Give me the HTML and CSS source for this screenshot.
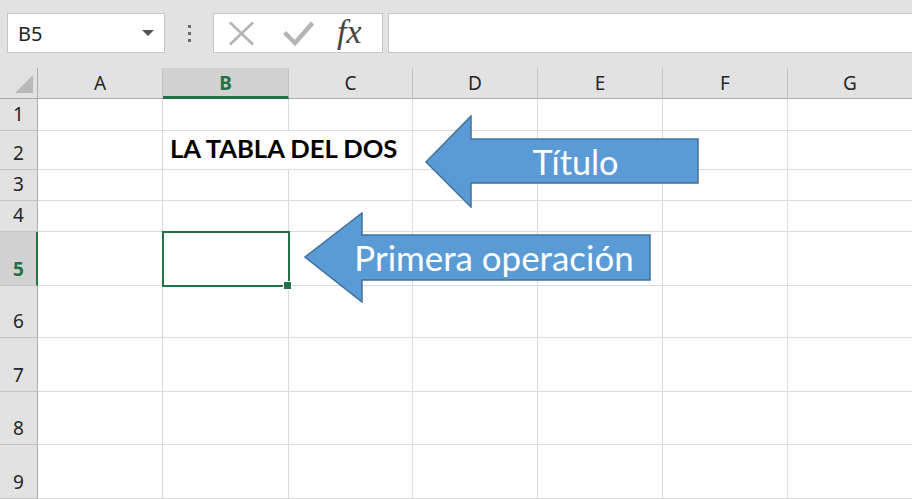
FILE: index.html
```html
<!DOCTYPE html>
<html lang="es">
<head>
    <meta charset="UTF-8">
    <meta name="viewport" content="width=device-width, initial-scale=1.0">
    <title>La tabla del dos</title>
    <link rel="stylesheet" href="styles.css">
</head>
<body>
    <div class="toolbar">
        <div class="namebox">
            <span class="name">B5</span>
            <span class="caret"></span>
        </div>
        <div class="grip"><i></i><i></i><i></i></div>
        <div class="fx-buttons">
            <svg class="btn-cancel" width="27" height="25" viewBox="0 0 27 25">
                <path d="M2 1.5 L25 23.5 M25 1.5 L2 23.5" stroke="#b4b4b4" stroke-width="2.6" fill="none"/>
            </svg>
            <svg class="btn-enter" width="31" height="25" viewBox="0 0 31 25">
                <path d="M1.5 11.5 L12 22 L29.5 2" stroke="#b4b4b4" stroke-width="4.4" fill="none"/>
            </svg>
            <span class="fx">fx</span>
        </div>
        <div class="formula-input"></div>
    </div>

    <div class="sheet">
        <!-- column headers -->
        <div class="corner"><span class="select-all"></span></div>
        <div class="col-head">A</div>
        <div class="col-head active">B</div>
        <div class="col-head">C</div>
        <div class="col-head">D</div>
        <div class="col-head">E</div>
        <div class="col-head">F</div>
        <div class="col-head">G</div>

        <div class="row-head">1</div>
        <div class="cell"></div><div class="cell"></div><div class="cell"></div><div class="cell"></div><div class="cell"></div><div class="cell"></div><div class="cell"></div>

        <div class="row-head">2</div>
        <div class="cell"></div>
        <div class="cell title">LA TABLA DEL DOS</div>
        <div class="cell"></div><div class="cell"></div><div class="cell"></div><div class="cell"></div>

        <div class="row-head">3</div>
        <div class="cell"></div><div class="cell"></div><div class="cell"></div><div class="cell"></div><div class="cell"></div><div class="cell"></div><div class="cell"></div>

        <div class="row-head">4</div>
        <div class="cell"></div><div class="cell"></div><div class="cell"></div><div class="cell"></div><div class="cell"></div><div class="cell"></div><div class="cell"></div>

        <div class="row-head active">5</div>
        <div class="cell"></div>
        <div class="cell selected"><span class="selection"></span><span class="fill-handle"></span></div>
        <div class="cell"></div><div class="cell"></div><div class="cell"></div><div class="cell"></div><div class="cell"></div>

        <div class="row-head">6</div>
        <div class="cell"></div><div class="cell"></div><div class="cell"></div><div class="cell"></div><div class="cell"></div><div class="cell"></div><div class="cell"></div>

        <div class="row-head">7</div>
        <div class="cell"></div><div class="cell"></div><div class="cell"></div><div class="cell"></div><div class="cell"></div><div class="cell"></div><div class="cell"></div>

        <div class="row-head">8</div>
        <div class="cell"></div><div class="cell"></div><div class="cell"></div><div class="cell"></div><div class="cell"></div><div class="cell"></div><div class="cell"></div>

        <div class="row-head">9</div>
        <div class="cell"></div><div class="cell"></div><div class="cell"></div><div class="cell"></div><div class="cell"></div><div class="cell"></div><div class="cell"></div>
    </div>

    <!-- callout arrows drawn over the sheet -->
    <div class="callout callout-title">
        <svg width="275" height="93" viewBox="0 0 275 93">
            <polygon points="1,47 46,1 46,24 273,24 273,68 46,68 46,92" fill="#5b9bd5" stroke="#41719c" stroke-width="1.5"/>
        </svg>
        <span class="callout-label">Título</span>
    </div>
    <div class="callout callout-first">
        <svg width="348" height="91" viewBox="0 0 348 91">
            <polygon points="1,45 58,1 58,23 346,23 346,68 58,68 58,90" fill="#5b9bd5" stroke="#41719c" stroke-width="1.5"/>
        </svg>
        <span class="callout-label">Primera operación</span>
    </div>
</body>
</html>
```

FILE: styles.css
```css
body {
    margin: 0;
    background-color: #fff;
    font-family: "Noto Sans", "Open Sans", sans-serif;
    overflow: hidden;
    width: 912px;
    height: 499px;
    position: relative;
}

/* formula bar */
.toolbar {
    height: 68px;
    box-sizing: border-box;
    padding: 13px 0 0 7px;
    background-color: #e2e2e2;
    display: flex;
    align-items: flex-start;
}
.namebox {
    width: 158px;
    height: 40px;
    box-sizing: border-box;
    border: 1px solid #c6c6c6;
    background-color: #fff;
    display: flex;
    align-items: center;
    justify-content: space-between;
    padding: 0 10px 0 10px;
}
.name {
    font-size: 20px;
    color: #222;
}
.caret {
    width: 0;
    height: 0;
    border-left: 6px solid transparent;
    border-right: 6px solid transparent;
    border-top: 6px solid #555;
}
.grip {
    margin: 12px 22px 0 23px;
    display: flex;
    flex-direction: column;
    gap: 4px;
}
.grip i {
    display: block;
    width: 3px;
    height: 3px;
    background-color: #6b6b6b;
}
.fx-buttons {
    width: 170px;
    height: 40px;
    box-sizing: border-box;
    border: 1px solid #c6c6c6;
    background-color: #fff;
    display: flex;
    align-items: center;
    padding-left: 14px;
}
.btn-enter {
    margin-left: 28px;
}
.fx {
    margin-left: 23px;
    font-family: "Liberation Serif", "DejaVu Serif", serif;
    font-style: italic;
    font-size: 34px;
    color: #444;
    letter-spacing: 0;
    line-height: 1;
    margin-top: -3px;
}
.formula-input {
    flex: 1;
    height: 40px;
    margin-left: 5px;
    margin-right: -2px;
    box-sizing: border-box;
    border: 1px solid #c6c6c6;
    background-color: #fff;
}

/* grid */
.sheet {
    display: grid;
    grid-template-columns: 38px 125px 126px 124px 125px 125px 125px 125px;
    grid-template-rows: 31px 32px 39px 31px 31px 54px 52px 54px 53px 54px;
}
.corner, .col-head, .row-head {
    background-color: #e2e2e2;
    box-sizing: border-box;
    color: #262626;
    font-size: 19px;
    line-height: 19px;
    display: flex;
    justify-content: center;
    align-items: flex-end;
    padding-bottom: 5px;
}
.corner {
    border-right: 1px solid #ababab;
    border-bottom: 1px solid #ababab;
    position: relative;
}
.select-all {
    position: absolute;
    left: 15px;
    top: 7px;
    width: 0;
    height: 0;
    border-left: 18px solid transparent;
    border-bottom: 18px solid #b8b8b8;
}
.col-head {
    border-right: 1px solid #c4c4c4;
    border-bottom: 1px solid #ababab;
}
.col-head.active {
    background-color: #d2d2d2;
    color: #217346;
    font-weight: bold;
    border-bottom: 3px solid #217346;
    padding-bottom: 3px;
}
.row-head {
    border-right: 1px solid #ababab;
    border-bottom: 1px solid #c4c4c4;
    padding-bottom: 6px;
}
.row-head.active {
    background-color: #d2d2d2;
    color: #217346;
    font-weight: bold;
    border-right: 2px solid #217346;
    padding-left: 1px;
}
.cell {
    box-sizing: border-box;
    border-right: 1px solid #dadada;
    border-bottom: 1px solid #dadada;
}
.cell.title {
    grid-column: span 2;
    font-family: Lato, "Liberation Sans", sans-serif;
    font-weight: bold;
    font-size: 25.6px;
    line-height: 1;
    color: #000;
    white-space: nowrap;
    display: flex;
    align-items: flex-end;
    padding: 0 0 7px 7px;
}
.cell.selected {
    position: relative;
}
.selection {
    position: absolute;
    left: -1px;
    top: -1px;
    width: 128px;
    height: 56px;
    box-sizing: border-box;
    border: 2px solid #217346;
}
.fill-handle {
    position: absolute;
    left: 120px;
    top: 49px;
    width: 9px;
    height: 9px;
    box-sizing: border-box;
    border: 1px solid #fff;
    background-color: #217346;
}

/* callout arrows */
.callout {
    position: absolute;
}
.callout svg {
    display: block;
}
.callout-title {
    left: 425px;
    top: 115px;
    width: 275px;
    height: 93px;
}
.callout-first {
    left: 304px;
    top: 212px;
    width: 348px;
    height: 91px;
}
.callout-label {
    position: absolute;
    left: 0;
    right: 0;
    top: 0;
    bottom: 0;
    display: flex;
    align-items: center;
    justify-content: center;
    font-family: Lato, "Liberation Sans", sans-serif;
    color: #fff;
    white-space: nowrap;
}
.callout-title .callout-label {
    font-size: 34.2px;
    padding-left: 26px;
}
.callout-first .callout-label {
    font-size: 34.9px;
    padding-left: 32px;
}
```
